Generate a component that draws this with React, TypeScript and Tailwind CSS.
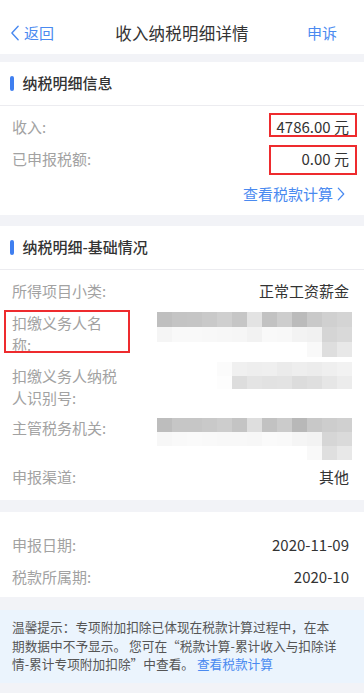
const font = { fontFamily: '"Noto Sans CJK SC", "Noto Sans", sans-serif' };

type Cell = string | null;

const block1: Cell[][] = [
  ["#bfbfbf", "#c4c4c4", "#c5c5c5", "#c9c9c9", "#cfcfcf", "#c6c6c6", "#e3e3e3", "#c2c2c2", "#cdcdcd", "#bbbbbb", "#c9c9c9", "#d0d0d0", "#d4d4d4"],
  ["#f5f5f5", "#f9f9f9", "#f9f9f9", "#f8f8f8", "#f7f7f7", "#f6f6f6", "#f2f2f2", "#f9f9f9", "#f8f8f8", "#f3f3f3", "#f1f1f1", "#d5d5d5", "#d9d9d9"],
  [null, null, null, null, null, null, null, null, null, null, "#f9f9f9", "#dedede", "#e8e8e8"],
];

const block2: Cell[][] = [
  ["#fbfbfb", "#f0f0f0", "#eeeeee", "#efefef", "#ebebeb", "#eeeeee", "#ececec", "#efefef", "#f2f2f2"],
  ["#fdfdfd", "#dddddd", "#e4e4e4", "#e2e2e2", "#e3e3e3", "#dcdcdc", "#dfdfdf", "#e6e6e6", "#ececec"],
];

const block3: Cell[][] = [
  ["#bdbdbd", "#c6c6c6", "#c6c6c6", "#c9c9c9", "#cdcdcd", "#c4c4c4", "#dedede", "#c2c2c2", "#cbcbcb", "#b8b8b8", "#c8c8c8", "#cdcdcd", "#d0d0d0"],
  ["#f7f7f7", "#f9f9f9", "#fafafa", "#f9f9f9", "#f8f8f8", "#f8f8f8", "#f7f7f7", "#fafafa", "#f9f9f9", "#f5f5f5", "#f3f3f3", "#d6d6d6", "#dadada"],
  [null, null, null, null, null, null, null, null, null, null, "#f9f9f9", "#dfdfdf", "#e8e8e8"],
];

function Mosaic({ rows, rowH = 15 }: { rows: Cell[][]; rowH?: number }) {
  return (
    <div className="flex flex-col">
      {rows.map((row, i) => (
        <div key={i} className="flex">
          {row.map((c, j) => (
            <div
              key={j}
              className="w-[15px]"
              style={{ height: rowH, backgroundColor: c ?? "transparent" }}
            />
          ))}
        </div>
      ))}
    </div>
  );
}

function Chevron({ dir, className }: { dir: "left" | "right"; className?: string }) {
  return (
    <svg viewBox="0 0 10 18" className={className} fill="none">
      <path
        d={dir === "left" ? "M8.5 1.5 1.5 9l7 7.5" : "M1.5 1.5 8.5 9l-7 7.5"}
        stroke="currentColor"
        strokeWidth="1.6"
        strokeLinecap="round"
        strokeLinejoin="round"
      />
    </svg>
  );
}

function SectionTitle({ title }: { title: string }) {
  return (
    <div className="h-[44px] flex items-center pl-[10px] border-b border-[#ececf0]">
      <span className="w-[3.5px] h-[15px] rounded-full bg-[#3f7ff0]" />
      <span className="ml-[9px] text-[15px] font-medium text-[#333]">{title}</span>
    </div>
  );
}

function Row({ label, value }: { label: string; value: React.ReactNode }) {
  return (
    <div className="h-[32px] flex items-center justify-between pl-[12px] pr-[15px] text-[15px]">
      <span className="text-[#a2a2a2]">{label}</span>
      <span className="text-[#333]">{value}</span>
    </div>
  );
}

export default function App() {
  return (
    <div className="w-full min-h-[693px] bg-[#f2f3f7]" style={font}>
      {/* NAV */}
      <div className="h-[54px] bg-white pt-[21px] px-[10px] flex items-start justify-between leading-[24px]">
        <div className="h-[24px] flex items-center text-[#4a8af0] text-[15px] w-[60px]">
          <Chevron dir="left" className="w-[10px] h-[16px]" />
          <span className="ml-[4px]">返回</span>
        </div>
        <span className="text-[16.5px] text-[#333] tracking-[0.2px]">收入纳税明细详情</span>
        <div className="w-[60px] text-right pr-[17px] text-[15px] text-[#4a8af0]">申诉</div>
      </div>

      {/* INFO */}
      <div className="mt-[8px] bg-white">
        <SectionTitle title="纳税明细信息" />
        <div className="pt-[5px]">
          <Row
            label="收入:"
            value={
              <span className="relative inline-block">
                4786.00 元
                <span className="absolute right-[-8px] top-[-3px] w-[88px] h-[24px] border-2 border-[#ee2b2e]" />
              </span>
            }
          />
          <Row
            label="已申报税额:"
            value={
              <span className="relative inline-block">
                0.00 元
                <span className="absolute right-[-8px] top-[-3px] w-[88px] h-[30px] border-2 border-[#ee2b2e]" />
              </span>
            }
          />
          <div className="h-[32px] mt-[3px] flex items-center justify-end pr-[19px] text-[15px] text-[#4a8af0]">
            查看税款计算
            <Chevron dir="right" className="ml-[4px] w-[8px] h-[14px]" />
          </div>
          <div className="h-[5px]" />
        </div>
      </div>

      {/* BASIC */}
      <div className="mt-[11px] bg-white">
        <SectionTitle title="纳税明细-基础情况" />
        <div className="pt-[10px] pb-[12px] pl-[12px] pr-[15px] text-[15px] leading-[22px]">
          <div className="flex justify-between">
            <span className="text-[#a2a2a2]">所得项目小类:</span>
            <span className="text-[#333]">正常工资薪金</span>
          </div>
          <div className="mt-[10px] flex justify-between">
            <span className="relative w-[107px] text-[#a2a2a2]">
              扣缴义务人名称:
              <span className="absolute left-[-8px] top-[-2px] w-[126px] h-[43px] border-2 border-[#ee2b2e]" />
            </span>
            <div className="mr-[-3px]">
              <Mosaic rows={block1} />
            </div>
          </div>
          <div className="mt-[8px] flex justify-between">
            <span className="w-[107px] text-[#a2a2a2]">扣缴义务人纳税人识别号:</span>
            <div className="mr-[-3px] mt-[-3px]">
              <Mosaic rows={block2} rowH={13.5} />
            </div>
          </div>
          <div className="mt-[8px] flex justify-between">
            <span className="text-[#a2a2a2]">主管税务机关:</span>
            <div className="mr-[-3px] mt-[1px]">
              <Mosaic rows={block3} rowH={14} />
            </div>
          </div>
          <div className="mt-[6px] flex justify-between">
            <span className="text-[#a2a2a2]">申报渠道:</span>
            <span className="text-[#333]">其他</span>
          </div>
        </div>
      </div>

      {/* DATES */}
      <div className="mt-[12px] bg-white pt-[22px] pb-[9px] pl-[12px] pr-[15px] text-[15px] leading-[22px]">
        <div className="flex justify-between">
          <span className="text-[#a2a2a2]">申报日期:</span>
          <span className="text-[#333]">2020-11-09</span>
        </div>
        <div className="mt-[10px] flex justify-between">
          <span className="text-[#a2a2a2]">税款所属期:</span>
          <span className="text-[#333]">2020-10</span>
        </div>
      </div>

      {/* TIP */}
      <div className="mt-[13px] bg-[#ebf4fd] pt-[8px] pb-[9px] pl-[12px] pr-[10px] text-[12.7px] leading-[18.5px] text-[#555]">
        <p>
          温馨提示：专项附加扣除已体现在税款计算过程中，在本
          <br />
          期数据中不予显示。 您可在“税款计算-累计收入与扣除详
          <br />
          情-累计专项附加扣除”中查看。 <span className="text-[#4a8af0]">查看税款计算</span>
        </p>
      </div>
    </div>
  );
}
